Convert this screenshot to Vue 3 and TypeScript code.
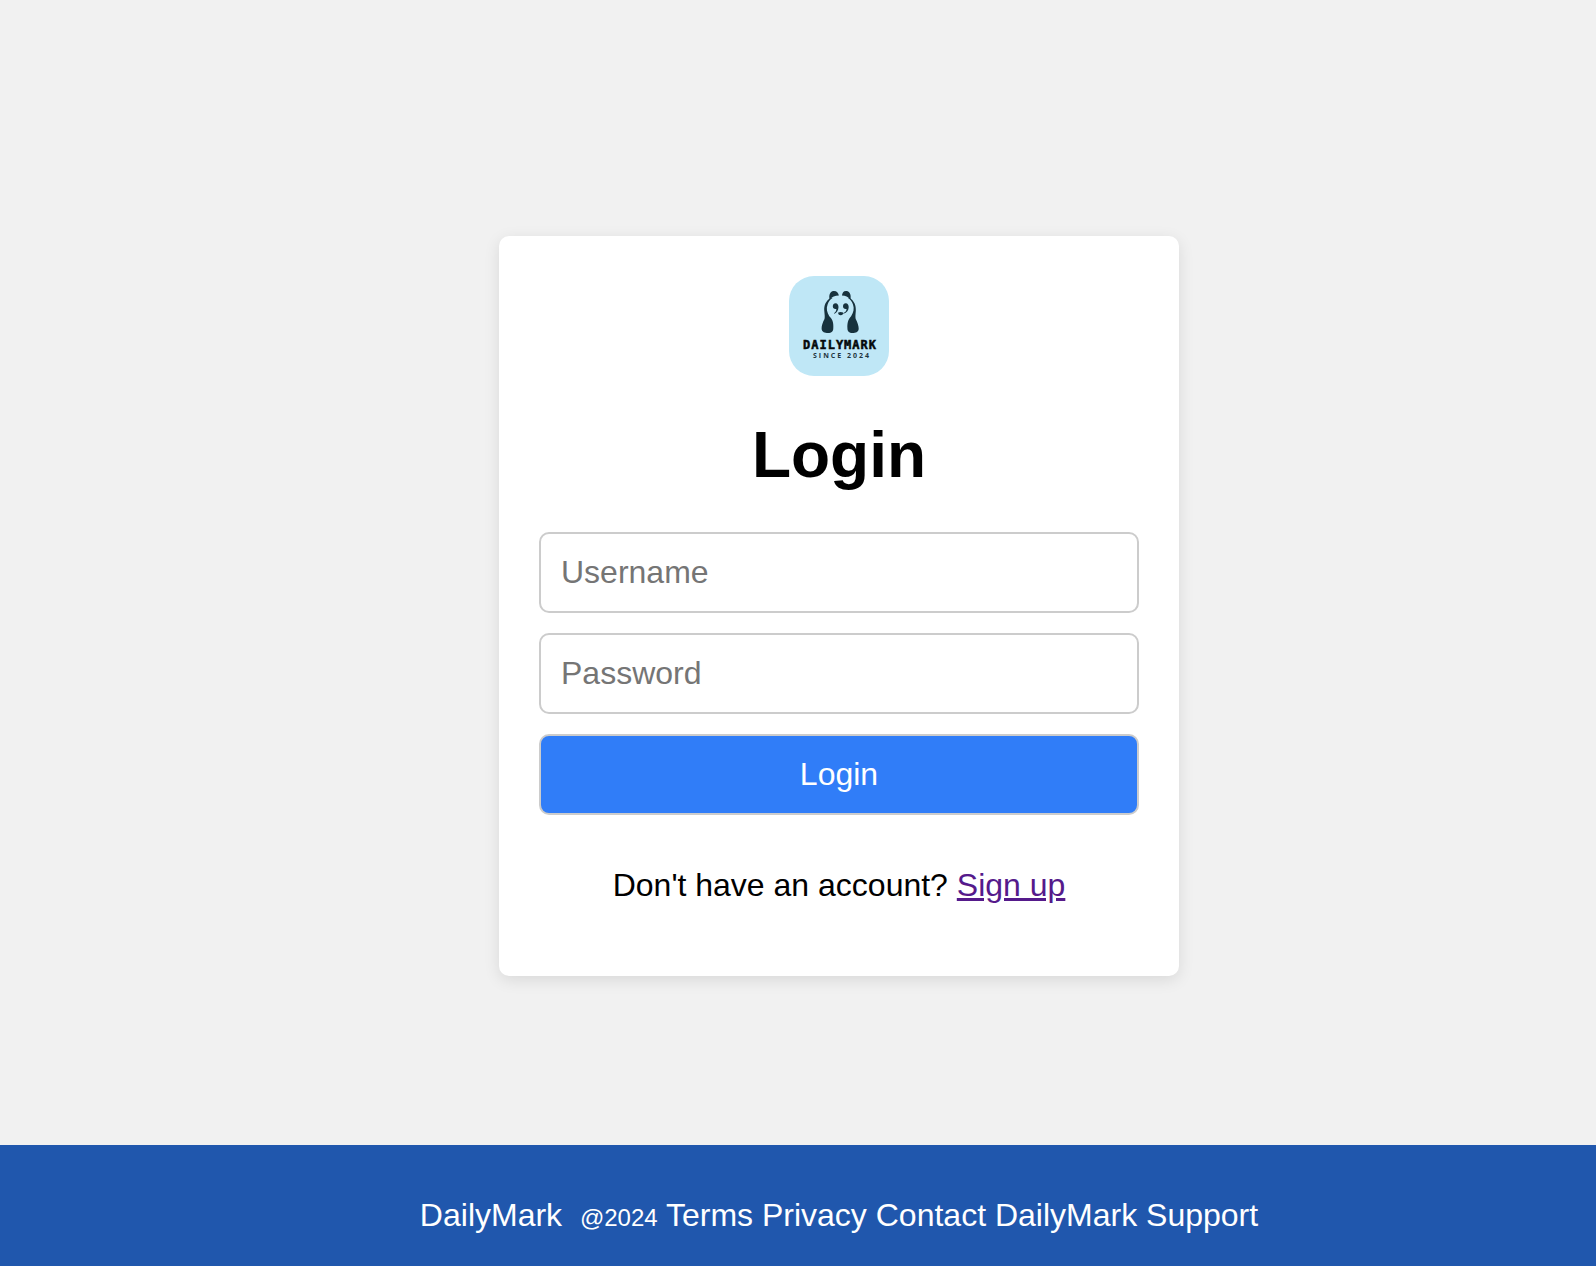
<script setup lang="ts">
import { ref } from 'vue'

const username = ref('')
const password = ref('')
const footerLinks: string[] = ['Terms', 'Privacy', 'Contact', 'DailyMark Support']
</script>

<template>
  <div class="page">
    <main class="content">
      <form class="card" @submit.prevent>
        <svg class="logo" viewBox="0 0 100 100" role="img" aria-label="DailyMark since 2024">
          <rect width="100" height="100" fill="#bfe7f6" />
          <g fill="#17323d">
            <path d="M40.4 22.5C39.8 17.5 42 15 45 15C47.8 15 49.3 17 49.9 19.6C46 19.8 43 21 40.4 23.5Z" />
            <path d="M61.6 22.5C62.2 17.5 60 15 57 15C54.2 15 53.5 17 52.9 19.6C56.5 19.8 59 21 61.6 23.5Z" />
            <path d="M42.3 21.5C36.8 24.5 34.8 29.5 35.3 35C35.6 38.7 36 40.5 35.5 43C33.7 46.5 32.4 50 32.6 53C33 56 35.7 57 39 57C42.7 57 44.3 55.5 44.3 52C44.6 47.5 43.8 43 40.3 40.2C38 36.5 37 32.5 38.6 28.5C39.5 25.5 41 23.5 43.5 22Z" />
            <path d="M60 21.5C65.2 24.5 67.2 29.5 66.8 35C66.5 38.7 66.2 40.5 66.7 43C68.5 46.5 69.8 50 69.7 53C69.4 56 66.7 57 63.6 57C60 57 58.4 55.5 58.4 52C58.2 47.5 59 43 62.1 40.2C64.6 36.5 65.4 32.5 64 28.5C63 25.5 61.5 23.5 59 22Z" />
            <path d="M46.5 27.3C48.5 27.3 49.6 29 49.5 31.3C49.3 34.4 47.8 36.9 45.4 37.8L45 37.3C46.8 36 47.5 34.5 47.3 33C45.2 33.4 43.8 32.2 43.8 30.3C43.8 28.5 45 27.3 46.5 27.3Z" />
            <path d="M56.7 27.3C58.7 27.3 59.8 29 59.7 31.3C59.5 34.4 58 36.9 54.4 37.8L54.1 37.3C56.8 36 57.7 34.5 57.5 33C55.4 33.4 54 32.2 54 30.3C54 28.5 55.2 27.3 56.7 27.3Z" />
            <path d="M49.2 36.5Q51.7 35.3 54.1 36.5Q54.4 39.2 51.7 39.3Q49 39.2 49.2 36.5Z" />
          </g>
          <text class="logo-name" x="14" y="73">DAILYMARK</text>
          <text class="logo-since" x="24" y="82">SINCE 2024</text>
        </svg>
        <h1 class="title">Login</h1>
        <div class="fields">
          <input v-model="username" class="control" type="text" placeholder="Username" aria-label="Username" autocomplete="username" />
          <input v-model="password" class="control" type="password" placeholder="Password" aria-label="Password" autocomplete="current-password" />
          <button class="control submit" type="submit">Login</button>
        </div>
        <p class="signup">Don't have an account? <a href="#signup">Sign up</a></p>
      </form>
    </main>
    <footer class="footer">
      <span>DailyMark</span>&nbsp; <small>@2024</small>
      <template v-for="link in footerLinks" :key="link">{{ ' ' }}<a href="#">{{ link }}</a></template>
    </footer>
  </div>
</template>

<style>
body {
  margin: 0;
  background: #f1f1f1;
}
</style>

<style scoped>
.page {
  display: flex;
  flex-direction: column;
  min-height: 100vh;
  font-family: "Liberation Sans", Arial, sans-serif;
  font-size: 32px;
  line-height: 37px;
  color: #000;
}

.content {
  flex: 1;
  display: flex;
  align-items: center;
  justify-content: center;
  padding: 67px 0 0 82px;
}

.card {
  box-sizing: border-box;
  width: 100%;
  max-width: 680px;
  padding: 40px;
  border-radius: 10px;
  background: #fff;
  box-shadow: 0 4px 16px rgba(0, 0, 0, 0.1);
  text-align: center;
}

.logo {
  display: block;
  width: 100px;
  height: 100px;
  margin: 0 auto;
  border-radius: 25px;
}

.logo-name {
  font: bold 12px "DejaVu Sans Mono", monospace;
  letter-spacing: 1px;
  fill: #05090b;
  stroke: #05090b;
  stroke-width: 0.5px;
}

.logo-since {
  font: bold 7px "Open Sans", sans-serif;
  letter-spacing: 2px;
  fill: #1f3640;
}

.title {
  margin: 43px 0 40px;
  font-size: 64px;
  line-height: 73px;
  font-weight: bold;
}

.fields {
  display: flex;
  flex-direction: column;
  gap: 20px;
}

.control {
  box-sizing: border-box;
  width: 100%;
  height: 81px;
  padding: 20px;
  border: 2px solid #ccc;
  border-radius: 10px;
  background: #fff;
  font: inherit;
  color: #000;
}

.control::placeholder {
  color: #757575;
  opacity: 1;
}

.submit {
  background: #307df8;
  color: #fff;
  cursor: pointer;
}

.signup {
  margin: 52px 0 32px;
}

.signup a {
  color: #551a8b;
}

.footer {
  padding: 52px 0 32px 82px;
  background: #2057ad;
  color: #fff;
  text-align: center;
}

.footer small {
  font-size: 24px;
  line-height: 24px;
}

.footer a {
  color: inherit;
  text-decoration: none;
}
</style>
